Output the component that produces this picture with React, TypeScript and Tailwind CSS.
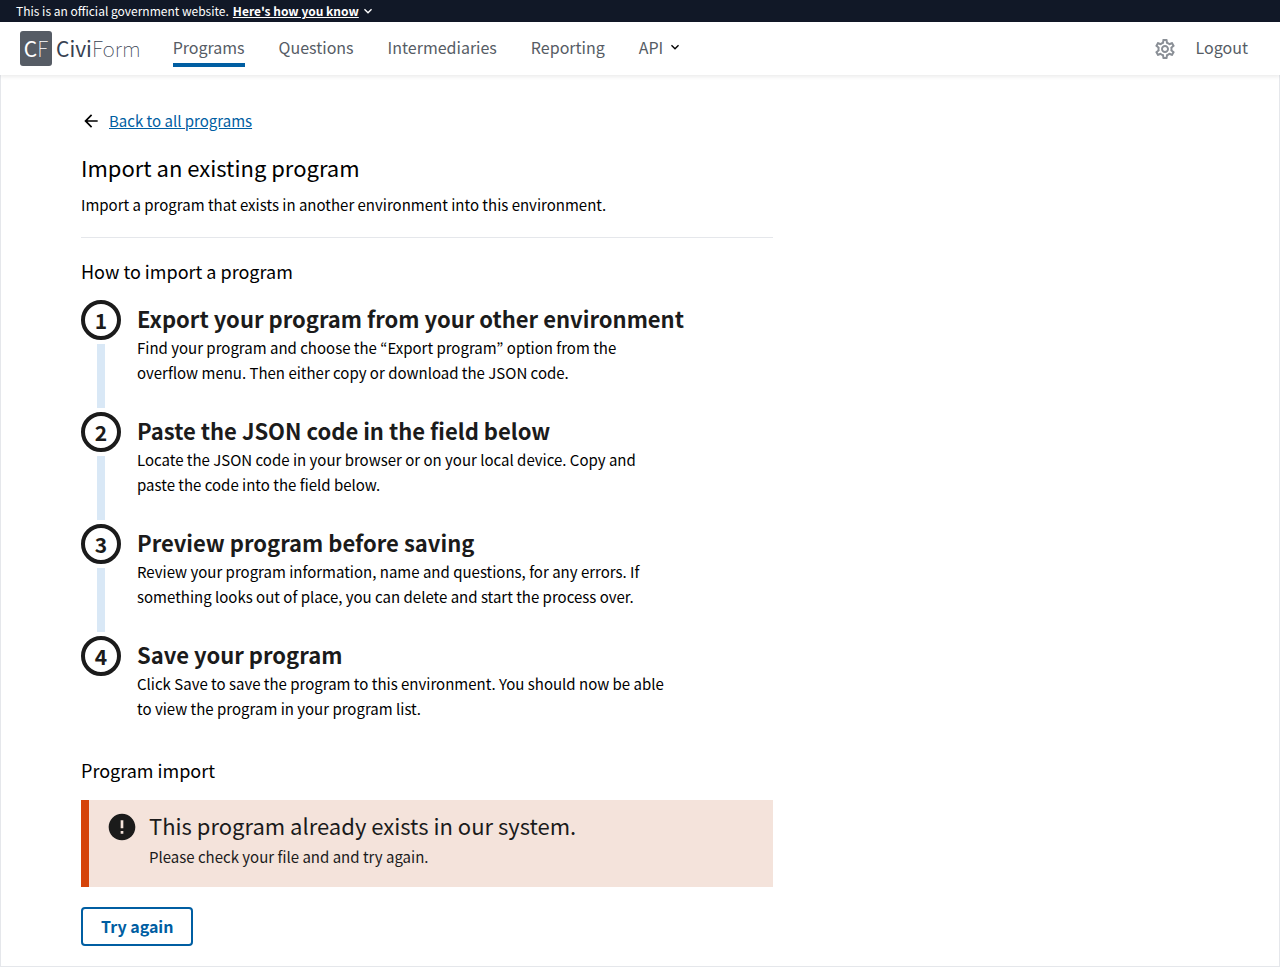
import { MdArrowBack, MdError, MdExpandMore, MdOutlineSettings } from "react-icons/md";

const NAV_LINKS = ["Questions", "Intermediaries", "Reporting"];

const STEPS = [
  {
    title: "Export your program from your other environment",
    body: "Find your program and choose the “Export program” option from the overflow menu. Then either copy or download the JSON code.",
  },
  {
    title: "Paste the JSON code in the field below",
    body: "Locate the JSON code in your browser or on your local device. Copy and paste the code into the field below.",
  },
  {
    title: "Preview program before saving",
    body: "Review your program information, name and questions, for any errors. If something looks out of place, you can delete and start the process over.",
  },
  {
    title: "Save your program",
    body: "Click Save to save the program to this environment. You should now be able to view the program in your program list.",
  },
];

function Banner() {
  return (
    <div className="flex items-center gap-1 bg-[#111827] px-4 text-[12px] leading-[22px] text-white">
      <p>This is an official government website.</p>
      <button type="button" className="flex items-center gap-px font-bold">
        <span className="underline">Here's how you know</span>
        <MdExpandMore className="size-4" aria-hidden="true" />
      </button>
    </div>
  );
}

function Logo() {
  return (
    <a href="#" className="flex items-center gap-1 text-[21px] leading-8 text-[#374151]">
      <span className="flex h-[35px] w-8 items-center justify-center rounded-[3px] bg-[#565c65] pb-0.5 text-white">
        C<span className="font-thin">F</span>
      </span>
      <span className="pb-0.5">
        Civi<span className="font-thin">Form</span>
      </span>
    </a>
  );
}

function Header() {
  return (
    <header className="relative flex h-[53px] items-center bg-white pr-8 pl-5 text-[16px] leading-6 text-[#565c65] shadow-[0_2px_4px_rgba(0,0,0,0.08)]">
      <Logo />
      <nav className="ml-8 flex items-center gap-[34px] pb-1">
        <a href="#" className="border-b-4 border-[#005ea2] pt-2 pb-1">
          Programs
        </a>
        {NAV_LINKS.map((label) => (
          <a key={label} href="#">
            {label}
          </a>
        ))}
        <button type="button" className="flex items-center gap-1">
          API
          <MdExpandMore className="size-4 text-black" aria-hidden="true" />
        </button>
      </nav>
      <div className="ml-auto flex items-center gap-[19px]">
        <a href="#" aria-label="Settings">
          <MdOutlineSettings className="size-6 text-[#8a8f96]" />
        </a>
        <a href="#" className="pb-1">
          Logout
        </a>
      </div>
    </header>
  );
}

export default function App() {
  return (
    <div className="flex min-h-screen flex-col bg-white font-['Noto_Sans_CJK_KR',sans-serif] text-black">
      <Banner />
      <Header />
      <main className="flex-1 border border-t-0 border-[#e5e7eb] px-20 pt-8 pb-5">
        <div className="max-w-[692px]">
          <a href="#" className="flex items-center gap-2 text-[15px] leading-7 text-[#005ea2]">
            <MdArrowBack className="size-5 text-black" aria-hidden="true" />
            <span className="underline">Back to all programs</span>
          </a>
          <h1 className="mt-4 text-[22px] leading-8">Import an existing program</h1>
          <p className="mt-2 text-[15px] leading-7">
            Import a program that exists in another environment into this environment.
          </p>
          <hr className="mt-[18px] border-[#e5e7eb]" />
          <h2 className="mt-[19px] text-[18px] leading-7">How to import a program</h2>
          <ol className="mt-[15px]">
            {STEPS.map((step, index) => (
              <li key={step.title} className="group flex min-h-28 gap-4">
                <div className="flex flex-col items-center gap-1 pb-1">
                  <span className="flex size-10 items-center justify-center rounded-full border-4 border-[#1b1b1b] text-[21px] leading-8 font-bold text-[#1b1b1b]">
                    {index + 1}
                  </span>
                  <span className="w-2 flex-1 bg-[#d9e8f6] group-last:hidden" />
                </div>
                <div>
                  <h3 className="pt-px text-[22px] leading-[34px] font-bold text-[#1b1b1b]">{step.title}</h3>
                  <p className="max-w-[536px] text-[15px] leading-[25px]">{step.body}</p>
                </div>
              </li>
            ))}
          </ol>
          <h2 className="mt-2 text-[18px] leading-7">Program import</h2>
          <div role="alert" className="mt-4 flex gap-[11px] border-l-8 border-[#d54309] bg-[#f4e3db] pt-[11px] pr-4 pb-4 pl-[17px] text-[#1b1b1b]">
            <MdError className="size-8 shrink-0" aria-hidden="true" />
            <div>
              <h3 className="text-[22px] leading-7">This program already exists in our system.</h3>
              <p className="mt-1 text-[15px] leading-7">Please check your file and and try again.</p>
            </div>
          </div>
          <button
            type="button"
            className="mt-5 rounded-[4px] border-2 border-[#005ea2] px-[18px] py-[5px] text-[16px] leading-[25px] font-bold text-[#005ea2]"
          >
            Try again
          </button>
        </div>
      </main>
    </div>
  );
}
